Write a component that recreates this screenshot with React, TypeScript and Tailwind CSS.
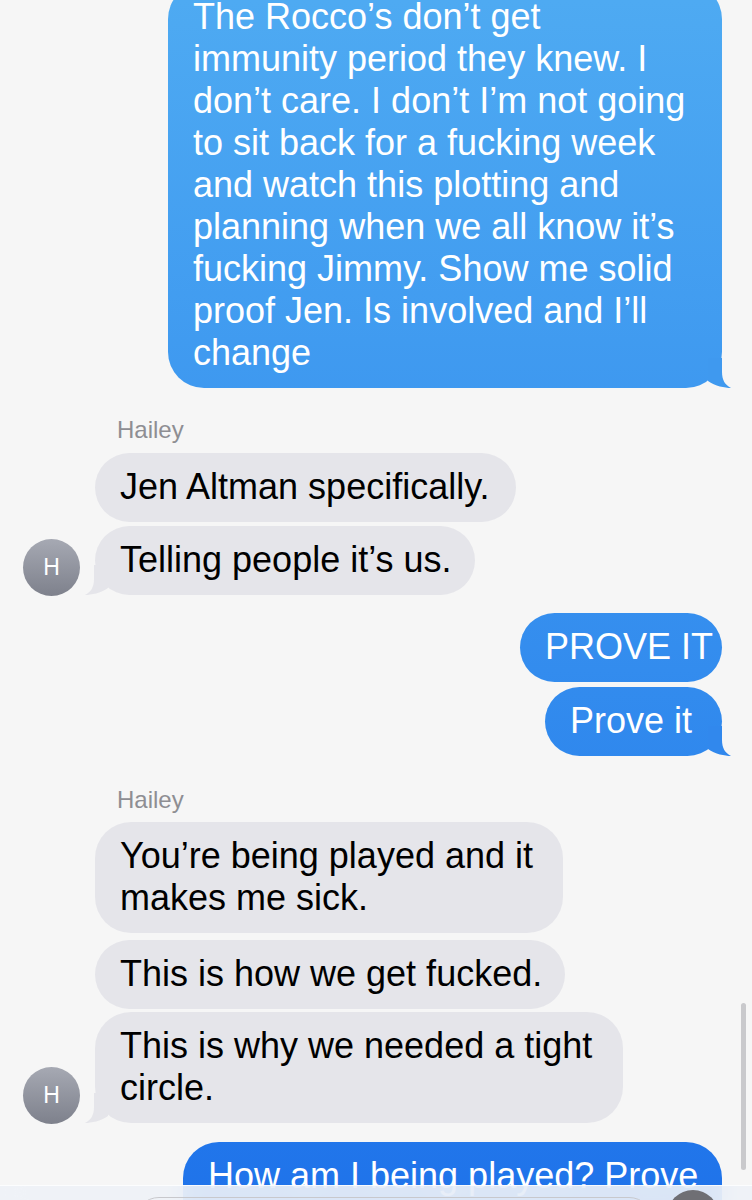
import clsx from "clsx";

type Msg = {
  lines: string[];
  w: string;
  mt: string;
  tail?: string;
  avatar?: boolean;
};

const outgoingTop: Msg = {
  lines: [
    "The Rocco’s don’t get",
    "immunity period they knew. I",
    "don’t care. I don’t I’m not going",
    "to sit back for a fucking week",
    "and watch this plotting and",
    "planning when we all know it’s",
    "fucking Jimmy. Show me solid",
    "proof Jen. Is involved and I’ll",
    "change",
  ],
  w: "w-[554px]",
  mt: "-mt-[17px]",
  tail: "#3f99ef",
};

const first: Msg[] = [
  { lines: ["Jen Altman specifically."], w: "w-[421px]", mt: "mt-[10px]" },
  { lines: ["Telling people it’s us."], w: "w-[380px]", mt: "mt-[4px]", tail: "#e5e5ea", avatar: true },
];

const proves: Msg[] = [
  { lines: ["PROVE IT"], w: "w-[202px]", mt: "mt-[18px]" },
  { lines: ["Prove it"], w: "w-[177px]", mt: "mt-[5px]", tail: "#3188ed" },
];

const second: Msg[] = [
  { lines: ["You’re being played and it", "makes me sick."], w: "w-[468px]", mt: "mt-[9px]" },
  { lines: ["This is how we get fucked."], w: "w-[470px]", mt: "mt-[7px]" },
  {
    lines: ["This is why we needed a tight", "circle."],
    w: "w-[528px]",
    mt: "mt-[3px]",
    tail: "#e5e5ea",
    avatar: true,
  },
];

function Tail({ side, color }: { side: "left" | "right"; color: string }) {
  return (
    <svg
      width="32"
      height="30"
      viewBox="0 0 32 30"
      className={clsx(
        "absolute bottom-0",
        side === "right" ? "right-[-10px]" : "left-[-11px] -scale-x-100"
      )}
    >
      <path d="M8 0 H22 V14 C22 22 25 27 31 30 C25 30 15 28 8 23 Z" fill={color} />
    </svg>
  );
}

function Bubble({ msg, out }: { msg: Msg; out?: boolean }) {
  return (
    <div
      className={clsx(
        "relative rounded-[36px] pl-[25px] pt-[13px] pb-[14px] text-[36px] leading-[42px] whitespace-nowrap",
        out ? "bg-linear-to-b from-[#4eaaf2] to-[#1f73ea] bg-fixed text-white" : "bg-[#e5e5ea] text-black",
        msg.w
      )}
    >
      {msg.lines.map((l) => (
        <div key={l}>{l}</div>
      ))}
      {msg.tail && <Tail side={out ? "right" : "left"} color={msg.tail} />}
    </div>
  );
}

function Outgoing({ msg }: { msg: Msg }) {
  return (
    <div className={clsx("self-end mr-[30px]", msg.mt)}>
      <Bubble msg={msg} out />
    </div>
  );
}

function Incoming({ msg }: { msg: Msg }) {
  return (
    <div className={clsx("flex items-end pl-[23px]", msg.mt)}>
      <div className="mr-[16px] w-[56px] shrink-0">
        {msg.avatar && (
          <div className="flex h-[57px] w-[57px] translate-y-[1px] items-center justify-center rounded-full bg-linear-to-b from-[#a6a9b3] to-[#7e818c] text-[23px] font-medium text-white">
            H
          </div>
        )}
      </div>
      <Bubble msg={msg} />
    </div>
  );
}

function Sender({ mt }: { mt: string }) {
  return <div className={clsx("pl-[117px] text-[24px] leading-[26px] text-[#8e8e93]", mt)}>Hailey</div>;
}

export default function App() {
  return (
    <div className="relative h-[1200px] w-[752px] overflow-hidden bg-[#f6f6f6] font-['Liberation_Sans',Arial,sans-serif]">
      <div className="flex flex-col">
        <Outgoing msg={outgoingTop} />
        <Sender mt="mt-[29px]" />
        {first.map((m) => (
          <Incoming key={m.lines[0]} msg={m} />
        ))}
        {proves.map((m) => (
          <Outgoing key={m.lines[0]} msg={m} />
        ))}
        <Sender mt="mt-[31px]" />
        {second.map((m) => (
          <Incoming key={m.lines[0]} msg={m} />
        ))}
        <Outgoing
          msg={{ lines: ["How am I being played? Prove", "it"], w: "w-[539px]", mt: "mt-[19px]" }}
        />
      </div>

      {/* scroll indicator */}
      <div className="absolute right-[6px] top-[1003px] h-[167px] w-[5px] rounded-full bg-[#c9c9cc]" />

      {/* frosted input bar */}
      <div className="absolute inset-x-0 bottom-0 h-[15px] border-t border-white/80 bg-[#eef2f7]/90 backdrop-blur-md">
        <div className="absolute left-[134px] top-[11px] h-[50px] w-[520px] rounded-full border border-[#c8c8cc]" />
        <div className="absolute left-[667px] top-[4px] h-[52px] w-[52px] rounded-full bg-[#6f6f74]" />
      </div>
    </div>
  );
}
